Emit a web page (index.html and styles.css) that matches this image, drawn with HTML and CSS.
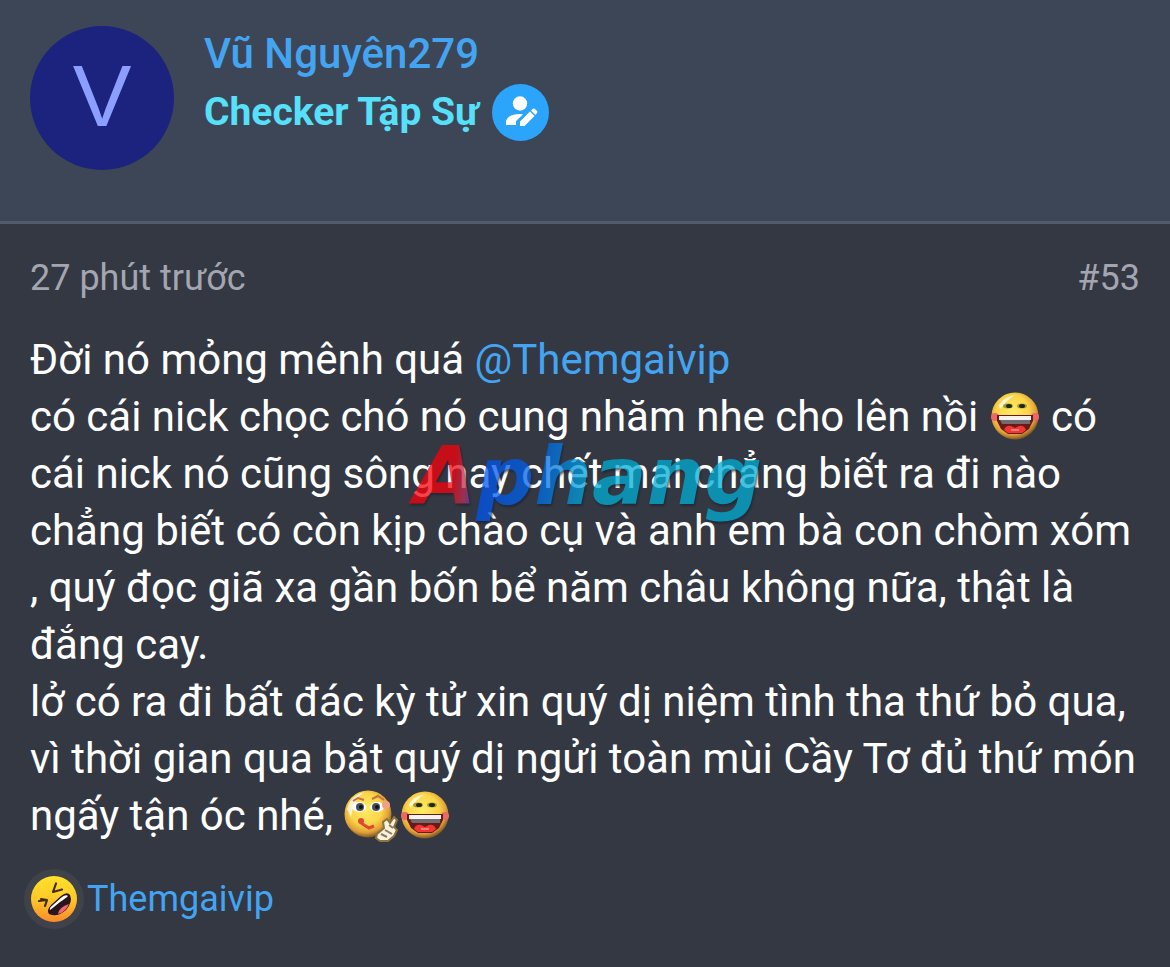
FILE: index.html
```html
<!DOCTYPE html>
<html lang="vi">
<head>
<meta charset="utf-8">
<meta name="viewport" content="width=device-width, initial-scale=1">
<title>Vũ Nguyên279</title>
<link rel="stylesheet" href="styles.css">
</head>
<body>
<svg class="defs" aria-hidden="true">
  <defs>
    <radialGradient id="face" cx=".45" cy=".4" r=".62">
      <stop offset="0" stop-color="#ffec66"/><stop offset=".55" stop-color="#fbd548"/><stop offset=".8" stop-color="#dfa038"/><stop offset="1" stop-color="#6e4a22"/>
    </radialGradient>
    <linearGradient id="rofl" x1="0" y1="0" x2="0" y2="1">
      <stop offset="0" stop-color="#ffe22c"/><stop offset=".5" stop-color="#ffc928"/><stop offset="1" stop-color="#f98a2a"/>
    </linearGradient>
    <symbol id="laugh" viewBox="0 0 48 48">
      <circle cx="24" cy="24" r="23.500" fill="url(#face)"/>
      <path d="M8 13Q13 5 24 3Q16 8 9 17Z" fill="#fff6d8"/>
      <circle cx="4" cy="25" r="4" fill="#ea6a62"/><circle cx="44" cy="25" r="4" fill="#ea6a62"/>
      <ellipse cx="17" cy="14" rx="5" ry="2.500" fill="#a79a35"/><ellipse cx="31" cy="14" rx="5" ry="2.500" fill="#a79a35"/>
      <ellipse cx="18" cy="14" rx="3" ry="2" fill="#1f2c0c"/><ellipse cx="31" cy="14" rx="3" ry="2" fill="#1f2c0c"/>
      <path d="M6 23H42V29L38 37L31 42H17L10 37L6 29Z" fill="#6a1a16"/>
      <path d="M8 24H40V28H8Z" fill="#f6f2f0"/><path d="M9 28H39V32H11Z" fill="#716b72"/>
      <path d="M13 38Q15 33 20 34L24 36L28 34Q33 33 35 38L31 41H17Z" fill="#f23633"/>
      <path d="M20 37H28V39H20Z" fill="#ff7a72"/>
    </symbol>
  </defs>
</svg>
<article class="post">
  <header class="post-user">
    <a class="avatar" href="#user">V</a>
    <div class="user-info">
      <a class="username" href="#user">Vũ Nguyên279</a>
      <div class="user-title">
        <span>Checker Tập Sự</span>
        <svg class="badge" viewBox="0 0 57 57" aria-hidden="true">
          <circle cx="28.500" cy="28.500" r="28.500" fill="#2ba4fc"/>
          <circle cx="28" cy="19.500" r="7.200" fill="#fff"/>
          <path d="M14 41V37Q16 30 28 30Q30 30 31 30.500L24 37V41Z" fill="#fff"/>
          <path d="M28 42V37.500L38 27.500L42.500 32L32.500 42Z M39 26.500L41 24.800Q42 24 43 25L45 27Q46 28 45 29L43.500 31Z" fill="#fff"/>
        </svg>
      </div>
    </div>
  </header>
  <div class="post-main">
    <div class="post-meta">
      <time>27 phút trước</time>
      <a href="#post-53">#53</a>
    </div>
    <div class="post-body">
      <p>Đời nó mỏng mênh quá <a class="link" href="#mention">@Themgaivip</a><br>
      có cái nick chọc chó nó cung nhăm nhe cho lên nồi <svg class="smilie" role="img" aria-label=":))"><use href="#laugh"/></svg> có cái nick nó cũng sông nay chết mai chẳng biết ra đi nào chẳng biết có còn kịp chào cụ và anh em bà con chòm xóm , quý đọc giã xa gần bốn bể năm châu không nữa, thật là đắng cay.<br>
      lở có ra đi bất đác kỳ tử xin quý dị niệm tình tha thứ bỏ qua, vì thời gian qua bắt quý dị ngửi toàn mùi Cầy Tơ đủ thứ món ngấy tận óc nhé, <span class="smilies"><svg class="smilie wide" viewBox="0 0 54 54" role="img" aria-label=";)">
        <circle cx="24" cy="24" r="23.500" fill="url(#face)"/>
        <path d="M3 19Q7 5 20 2Q9 10 7 27Z" fill="#fff0d4"/>
        <path d="M9 11L14 8L20 10M28 9L34 6L40 10" fill="none" stroke="#c96f45" stroke-width="2"/>
        <ellipse cx="15" cy="17" rx="7" ry="5" fill="#fff"/><ellipse cx="33" cy="17" rx="7" ry="5" fill="#fff"/>
        <circle cx="16" cy="17" r="4" fill="#46505a"/><circle cx="32" cy="17" r="4" fill="#46505a"/>
        <circle cx="17" cy="17" r="2" fill="#10151b"/><circle cx="33" cy="17" r="2" fill="#10151b"/>
        <circle cx="42" cy="15" r="4" fill="#f2a084"/>
        <path d="M16 32L20 35L25 38L30 36" fill="none" stroke="#df4931" stroke-width="3"/><circle cx="17" cy="31" r="3" fill="#df4931"/>
        <path d="M33 44L40 38L39 32L43 29L46 33L50 27L53 30L50 37L53 40L50 46L44 51L36 51L32 48Z" fill="#f7f3df" stroke="#8c743c" stroke-width="2"/>
        <path d="M37 44L43 47M41 40L48 44M45 35L49 38" stroke="#8d7860" stroke-width="2"/>
      </svg><svg class="smilie" role="img" aria-label=":))"><use href="#laugh"/></svg></span></p>
      <div class="watermark" aria-hidden="true">Aphang</div>
    </div>
    <footer class="reactions">
      <svg class="reaction" viewBox="0 0 60 60" role="img" aria-label="Haha">
        <circle cx="30" cy="30" r="30" fill="#40424a"/>
        <circle cx="30" cy="30" r="23" fill="url(#rofl)"/>
        <path d="M32 14.500L29 23L38 20.500M15 32L23 31L21 37M23 31L17 30" fill="none" stroke="#422b0d" stroke-width="2.200" stroke-linecap="round" stroke-linejoin="round"/>
        <path d="M25 45Q22 42 27 36L37 27Q43 22 46 26Q49 33 42 41Q33 49 25 45Z" fill="#29151c"/>
        <path d="M26 41Q25 39 29 36L38 28Q42 25 44 27Q42 29 36 33Q30 38 26 41Z" fill="#fff"/>
        <path d="M34 45Q35 38 45 35Q43 40 40 42Q37 45 34 45Z" fill="#ef6575"/>
      </svg>
      <a class="link" href="#reactions">Themgaivip</a>
    </footer>
  </div>
</article>
</body>
</html>
```
FILE: styles.css
```css
* { box-sizing: border-box; }
body {
  margin: 0;
  background: #343843;
  color: #fff;
  font-family: Roboto, sans-serif;
}
a { color: inherit; text-decoration: none; }
.defs { position: absolute; width: 0; height: 0; }
.post-user {
  display: flex;
  gap: 30px;
  padding: 26px 30px 51px;
  background: #3d4656;
  border-bottom: 3px solid #535a6c;
}
.avatar {
  display: flex;
  align-items: center;
  justify-content: center;
  width: 144px;
  height: 144px;
  border-radius: 50%;
  background: #1b237e;
  color: #8c9eff;
  font: 88px/1 "Liberation Sans", sans-serif;
  padding-bottom: 4px;
}
.username {
  display: block;
  color: #43a5f2;
  font-size: 42px;
  font-weight: 500;
  line-height: 56px;
}
.user-title {
  display: flex;
  align-items: center;
  gap: 13px;
  color: #56e0fa;
  font-size: 39px;
  font-weight: 700;
  line-height: 60px;
}
.badge { width: 57px; height: 57px; }
.post-main { padding: 30px 30px 36px; }
.post-meta {
  display: flex;
  justify-content: space-between;
  color: #a3a6b1;
  font-size: 36px;
  line-height: 48px;
}
.post-body { position: relative; margin-top: 29px; }
.post-body p {
  margin: 0;
  font-size: 42px;
  line-height: 57px;
}
.link { color: #43a5f2; }
.smilie { width: 48px; height: 48px; margin: 0 2px; vertical-align: -9px; }
.wide { width: 54px; height: 54px; margin: 0 1px; vertical-align: -14px; }
.smilies { white-space: nowrap; line-height: 1; }
.watermark {
  position: absolute;
  top: 91px;
  left: 50%;
  padding: 0 9px 0 15px;
  transform: translateX(-50%);
  font: italic 700 81px/108px "DejaVu Sans", sans-serif;
  color: transparent;
  background: linear-gradient(100deg, #f8000a 16%, #b8305a 20%, #0054f0 24%, #0064e8 38%, #00aed6 52%);
  -webkit-background-clip: text;
  background-clip: text;
  filter: drop-shadow(1px 2px 1px #1b2230);
  opacity: .74;
  pointer-events: none;
}
.reactions {
  display: flex;
  align-items: center;
  gap: 3px;
  margin: 25px 0 0 -6px;
  font-size: 36px;
  line-height: 48px;
}
.reaction { width: 60px; height: 60px; }
```
